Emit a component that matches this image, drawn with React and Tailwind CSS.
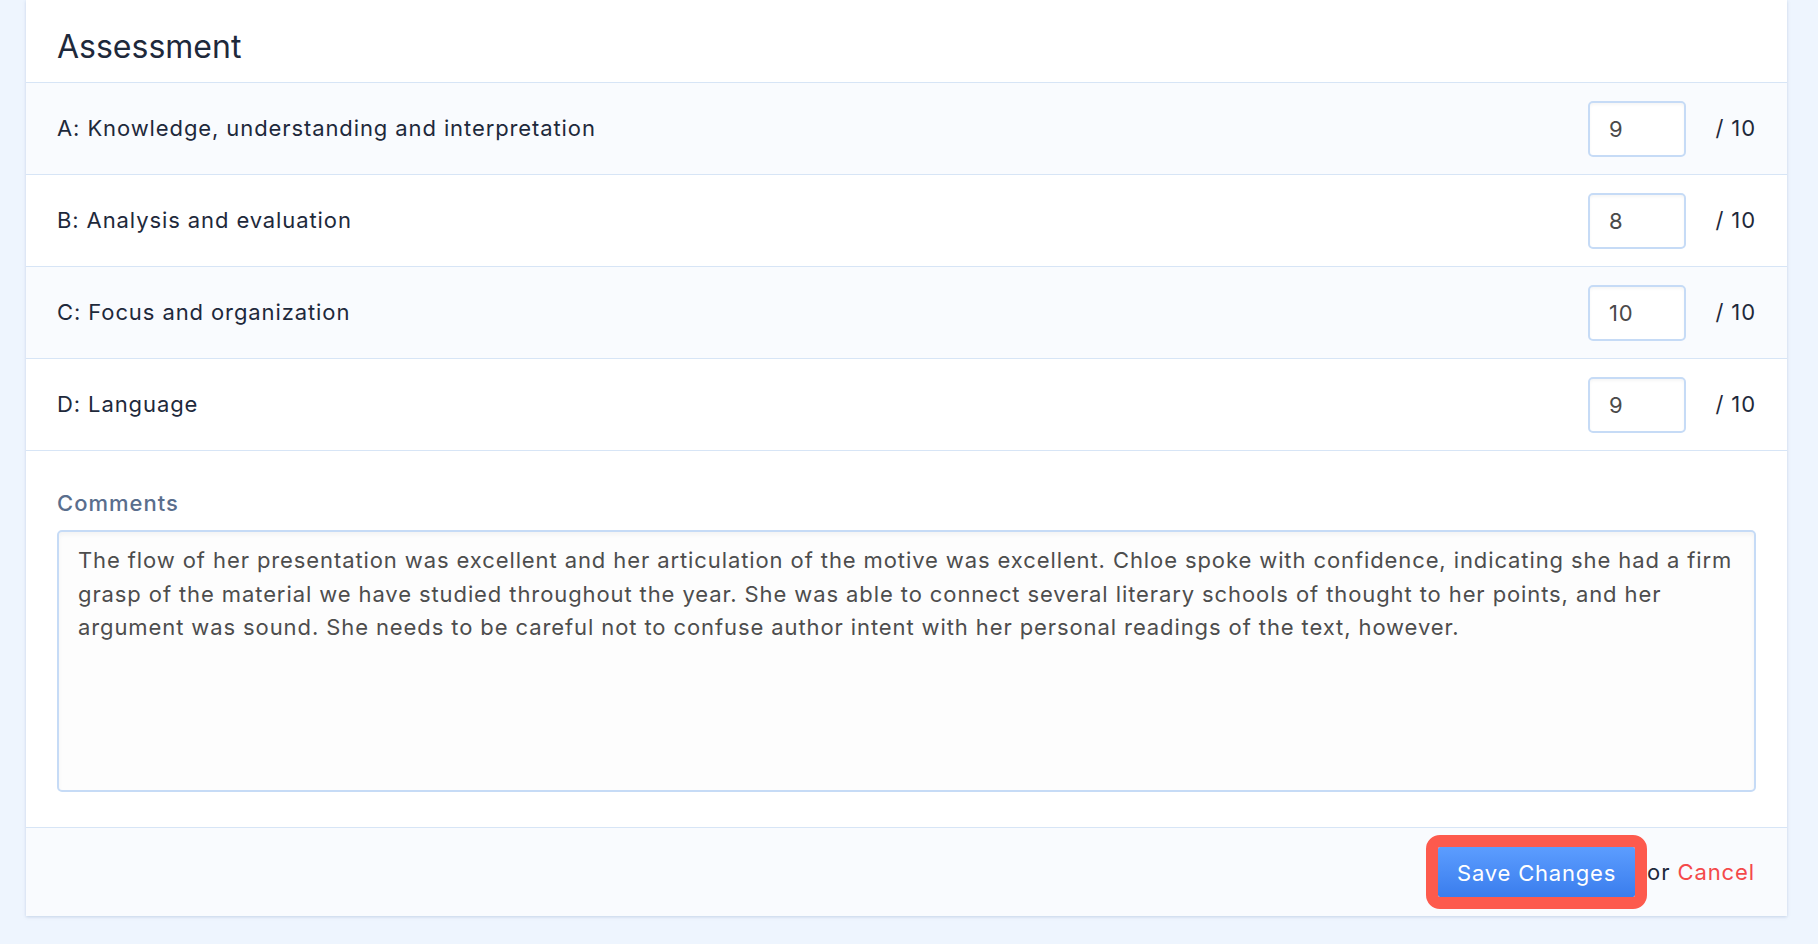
const criteria = [
  { label: 'A: Knowledge, understanding and interpretation', score: '9' },
  { label: 'B: Analysis and evaluation', score: '8' },
  { label: 'C: Focus and organization', score: '10' },
  { label: 'D: Language', score: '9' },
]

const comment =
  'The flow of her presentation was excellent and her articulation of the motive was excellent. Chloe spoke with confidence, indicating she had a firm grasp of the material we have studied throughout the year. She was able to connect several literary schools of thought to her points, and her argument was sound. She needs to be careful not to confuse author intent with her personal readings of the text, however.'

export default function App() {
  return (
    <div className="min-h-screen bg-[#eef5fe] pl-[26px] pr-[31px] pb-[26px] font-['Inter',sans-serif] text-[#1e293b]">
      <div className="bg-white shadow-[0_1px_3px_rgba(120,150,190,0.35)]">
        {/* Header */}
        <div className="border-b border-[#d7e5f6] px-[31px] pt-[27px] pb-[16px]">
          <h2 className="text-[32px] leading-[39px] font-normal">Assessment</h2>
        </div>

        {/* Criteria rows */}
        {criteria.map((c, i) => (
          <div
            key={c.label}
            className={`flex items-center h-[92px] border-b border-[#d7e5f6] px-[31px] ${i % 2 === 0 ? 'bg-[#f9fbfe]' : 'bg-white'}`}
          >
            <div className="flex-1 text-[22px] tracking-[0.9px]">{c.label}</div>
            <input
              defaultValue={c.score}
              className="w-[98px] h-[56px] rounded-[5px] border-2 border-[#c6dbf6] bg-white pl-[19px] text-[22px] tracking-[0.9px] text-[#4a4a4a] shadow-[inset_0_2px_3px_rgba(0,0,0,0.04)] outline-none font-['Inter',sans-serif]"
            />
            <div className="ml-[28px] w-[42px] text-[22px] tracking-[0.9px] whitespace-nowrap text-right">/ 10</div>
          </div>
        ))}

        {/* Comments */}
        <div className="border-b border-[#d7e5f6] px-[31px] pt-[39px] pb-[35px]">
          <label className="block text-[22px] leading-[27px] tracking-[1px] font-medium text-[#5a6e8d] mb-[13px]">Comments</label>
          <textarea
            defaultValue={comment}
            className="block w-full h-[262px] resize-none rounded-[5px] border-2 border-[#c6dbf6] bg-[#fdfdfd] px-[19px] pt-[12px] text-[22px] leading-[33.5px] tracking-[0.9px] text-[#4d4d4d] shadow-[inset_0_3px_4px_rgba(0,0,0,0.04)] outline-none font-['Inter',sans-serif]"
          />
        </div>

        {/* Footer */}
        <div className="flex items-center justify-end h-[88px] bg-[#f9fbfe] px-[32px]">
          <div className="relative">
            <button className="h-[50px] w-[197px] rounded-[2px] bg-gradient-to-b from-[#5c9dff] to-[#3a7ded] pt-[3px] text-white text-[22px] tracking-[0.8px]">
              Save Changes
            </button>
            {/* highlight frame */}
            <div className="pointer-events-none absolute -inset-[12px] rounded-[14px] border-[12px] border-[#fd5a4d]" />
          </div>
          <div className="ml-[12px] text-[22px] tracking-[0.9px]">
            or <span className="text-[#f4494a]">Cancel</span>
          </div>
        </div>
      </div>
    </div>
  )
}
